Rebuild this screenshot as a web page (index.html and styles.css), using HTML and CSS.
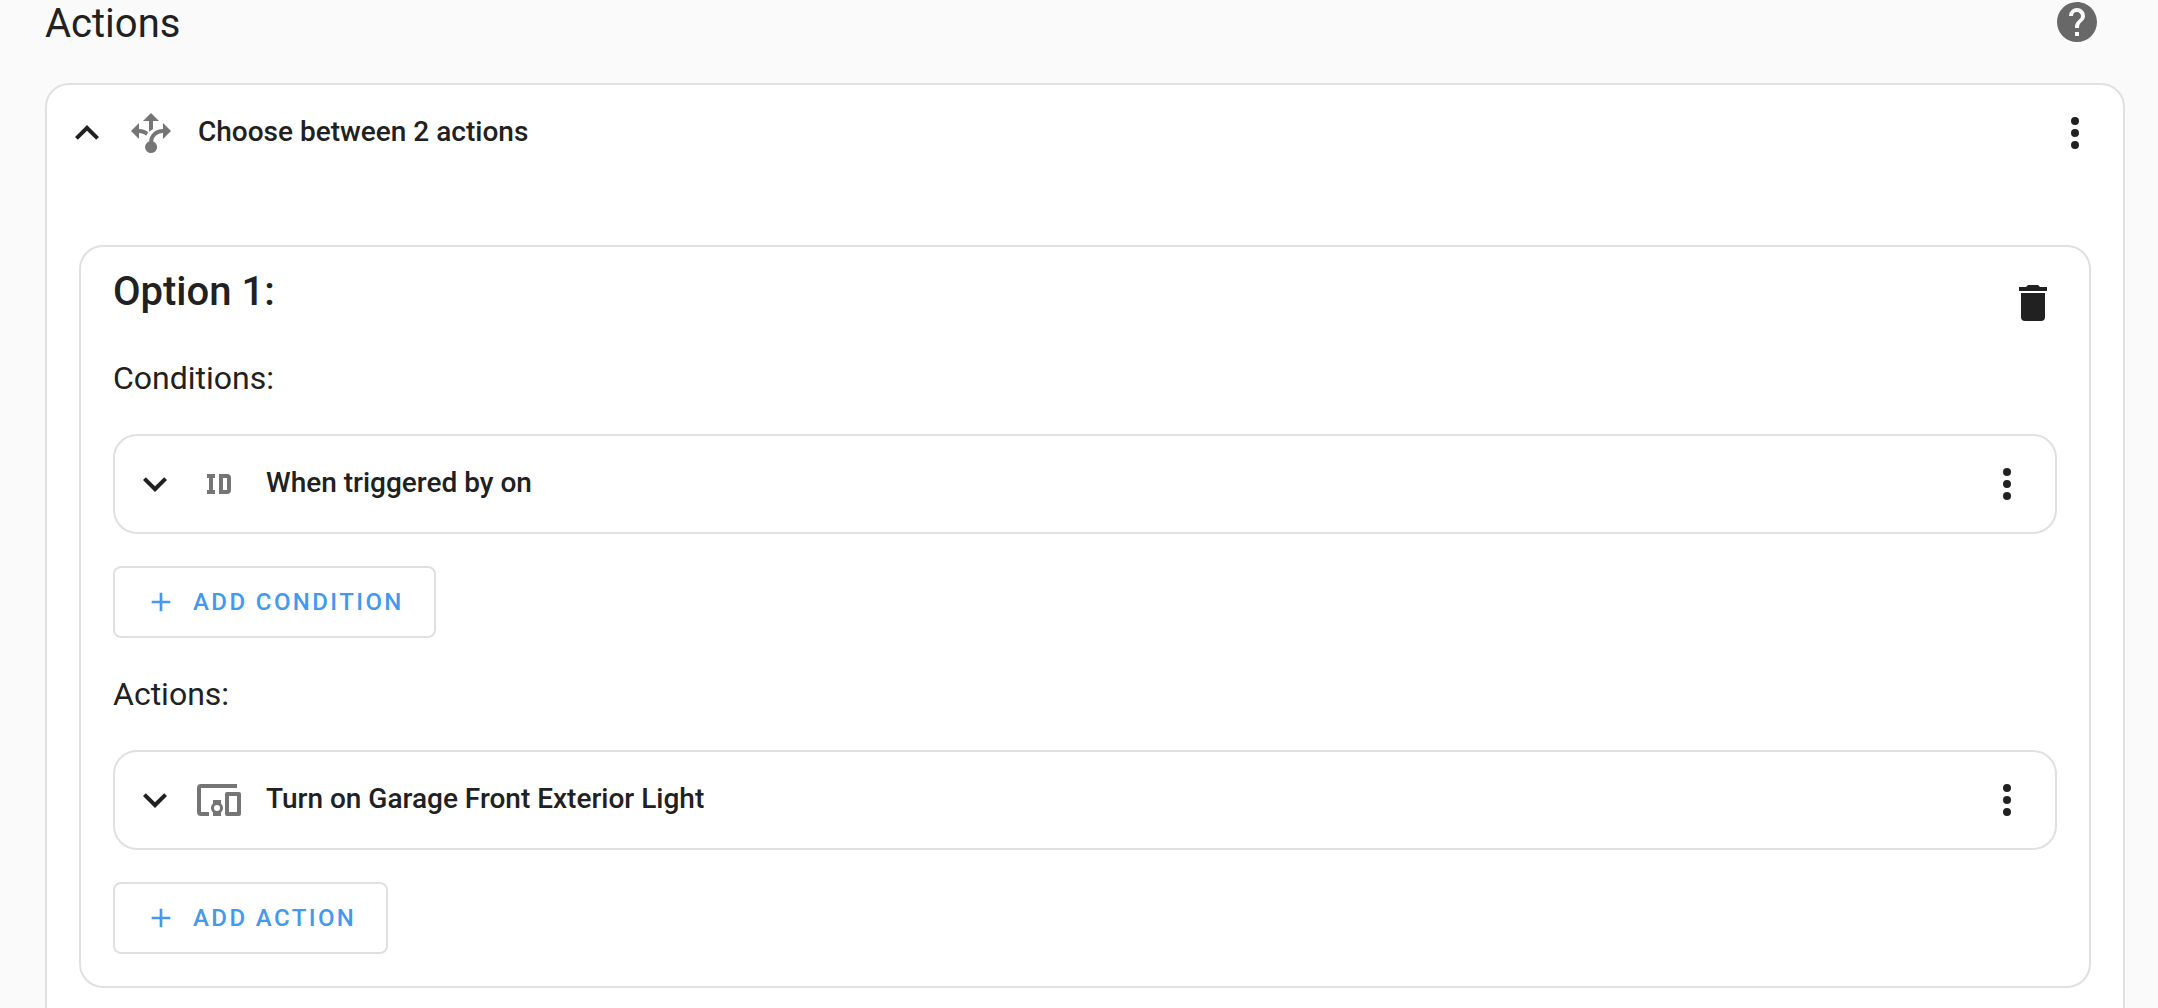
FILE: index.html
```html
<!DOCTYPE html>
<html lang="en">
<head>
    <meta charset="UTF-8">
    <meta name="viewport" content="width=device-width, initial-scale=1.0">
    <title>Automation Actions</title>
    <link rel="stylesheet" href="styles.css">
</head>
<body>
    <main class="page">
        <header class="page-header">
            <h1>Actions</h1>
            <a class="icon-link" href="#help" aria-label="Help">
                <svg class="icon" viewBox="0 0 24 24"><path d="M15.07,11.25L14.17,12.17C13.45,12.89 13,13.5 13,15H11V14.5C11,13.39 11.45,12.39 12.17,11.67L13.41,10.41C13.78,10.05 14,9.55 14,9C14,7.89 13.1,7 12,7A2,2 0 0,0 10,9H8A4,4 0 0,1 12,5A4,4 0 0,1 16,9C16,9.88 15.64,10.67 15.07,11.25M13,19H11V17H13M12,2A10,10 0 0,0 2,12A10,10 0 0,0 12,22A10,10 0 0,0 22,12C22,6.47 17.5,2 12,2Z"/></svg>
            </a>
        </header>

        <section class="card">
            <div class="row">
                <button class="icon-button" aria-label="Collapse">
                    <svg class="icon" viewBox="0 0 24 24"><path d="M7.41,15.41L12,10.83L16.59,15.41L18,14L12,8L6,14L7.41,15.41Z"/></svg>
                </button>
                <svg class="icon type-icon" viewBox="0 0 24 24"><path d="M9.64,13.4C8.63,12.5 7.34,12.03 6,12V15L2,11L6,7V10C7.67,10 9.3,10.57 10.63,11.59C10.22,12.15 9.89,12.76 9.64,13.4M18,15V12C17.5,12 13.5,12.16 13.05,16.2C14.61,16.75 15.43,18.47 14.88,20.03C14.33,21.59 12.61,22.41 11.05,21.86C9.5,21.3 8.67,19.59 9.22,18.03C9.5,17.17 10.2,16.5 11.05,16.2C11.34,12.61 14.4,9.88 18,10V7L22,11L18,15M13,6V10.1C12.2,10.5 11.6,10.9 11,11.4V6H8L12,2L16,6H13Z"/></svg>
                <h2 class="row-title">Choose between 2 actions</h2>
                <button class="icon-button" aria-label="Menu">
                    <svg class="icon" viewBox="0 0 24 24"><path d="M12,16A2,2 0 0,1 14,18A2,2 0 0,1 12,20A2,2 0 0,1 10,18A2,2 0 0,1 12,16M12,10A2,2 0 0,1 14,12A2,2 0 0,1 12,14A2,2 0 0,1 10,12A2,2 0 0,1 12,10M12,4A2,2 0 0,1 14,6A2,2 0 0,1 12,8A2,2 0 0,1 10,6A2,2 0 0,1 12,4Z"/></svg>
                </button>
            </div>

            <div class="card-content">
                <section class="card option">
                    <div class="option-header">
                        <h3>Option 1:</h3>
                        <button class="icon-button" aria-label="Delete option">
                            <svg class="icon" viewBox="0 0 24 24"><path d="M19,4H15.5L14.5,3H9.5L8.5,4H5V6H19M6,19A2,2 0 0,0 8,21H16A2,2 0 0,0 18,19V7H6V19Z"/></svg>
                        </button>
                    </div>

                    <h4>Conditions:</h4>
                    <div class="card row">
                        <button class="icon-button" aria-label="Expand">
                            <svg class="icon" viewBox="0 0 24 24"><path d="M7.41,8.58L12,13.17L16.59,8.58L18,10L12,16L6,10L7.41,8.58Z"/></svg>
                        </button>
                        <svg class="icon type-icon" viewBox="0 0 24 24"><path d="M6,7V9H7V15H6V17H10V15H9V9H10V7H6M12,7V17H16A2,2 0 0,0 18,15V9A2,2 0 0,0 16,7H12M14,9H16V15H14V9Z"/></svg>
                        <h5 class="row-title">When triggered by on</h5>
                        <button class="icon-button" aria-label="Menu">
                            <svg class="icon" viewBox="0 0 24 24"><path d="M12,16A2,2 0 0,1 14,18A2,2 0 0,1 12,20A2,2 0 0,1 10,18A2,2 0 0,1 12,16M12,10A2,2 0 0,1 14,12A2,2 0 0,1 12,14A2,2 0 0,1 10,12A2,2 0 0,1 12,10M12,4A2,2 0 0,1 14,6A2,2 0 0,1 12,8A2,2 0 0,1 10,6A2,2 0 0,1 12,4Z"/></svg>
                        </button>
                    </div>
                    <button class="add-button">
                        <svg viewBox="0 0 24 24"><path d="M19,13H13V19H11V13H5V11H11V5H13V11H19V13Z"/></svg>
                        Add condition
                    </button>

                    <h4>Actions:</h4>
                    <div class="card row">
                        <button class="icon-button" aria-label="Expand">
                            <svg class="icon" viewBox="0 0 24 24"><path d="M7.41,8.58L12,13.17L16.59,8.58L18,10L12,16L6,10L7.41,8.58Z"/></svg>
                        </button>
                        <svg class="icon type-icon" viewBox="0 0 24 24"><path d="M3,6H21V4H3A2,2 0 0,0 1,6V18A2,2 0 0,0 3,20H7V18H3V6M13,12H9V13.78C8.39,14.33 8,15.11 8,16C8,16.89 8.39,17.67 9,18.22V20H13V18.22C13.61,17.67 14,16.88 14,16C14,15.12 13.61,14.33 13,13.78V12M11,17.5A1.5,1.5 0 0,1 9.5,16A1.5,1.5 0 0,1 11,14.5A1.5,1.5 0 0,1 12.5,16A1.5,1.5 0 0,1 11,17.5M22,8H16A1,1 0 0,0 15,9V19A1,1 0 0,0 16,20H22A1,1 0 0,0 23,19V9A1,1 0 0,0 22,8M21,18H17V10H21V18Z"/></svg>
                        <h5 class="row-title">Turn on Garage Front Exterior Light</h5>
                        <button class="icon-button" aria-label="Menu">
                            <svg class="icon" viewBox="0 0 24 24"><path d="M12,16A2,2 0 0,1 14,18A2,2 0 0,1 12,20A2,2 0 0,1 10,18A2,2 0 0,1 12,16M12,10A2,2 0 0,1 14,12A2,2 0 0,1 12,14A2,2 0 0,1 10,12A2,2 0 0,1 12,10M12,4A2,2 0 0,1 14,6A2,2 0 0,1 12,8A2,2 0 0,1 10,6A2,2 0 0,1 12,4Z"/></svg>
                        </button>
                    </div>
                    <button class="add-button">
                        <svg viewBox="0 0 24 24"><path d="M19,13H13V19H11V13H5V11H11V5H13V11H19V13Z"/></svg>
                        Add action
                    </button>
                </section>
            </div>
        </section>
    </main>
</body>
</html>
```

FILE: styles.css
```css
* {
    box-sizing: border-box;
}
body {
    margin: 0;
    font-family: Roboto, sans-serif;
    font-size: 28px;
    color: #212121;
    background-color: #fafafa;
}
h1, h2, h3, h4, h5 {
    margin: 0;
}
.page {
    height: 100vh;
    overflow: hidden;
    padding: 0 33px 0 45px;
}
.page-header {
    display: flex;
    align-items: flex-start;
    justify-content: space-between;
    height: 83px;
    padding-right: 24px;
}
.page-header h1 {
    font-size: 40px;
    font-weight: 400;
    line-height: 47px;
}
.icon {
    display: block;
    flex: none;
    width: 48px;
    height: 48px;
    fill: currentColor;
}
.icon-link {
    color: #686868;
    line-height: 0;
    margin-top: -2px;
}
.icon-button {
    flex: none;
    padding: 0;
    border: none;
    background: none;
    color: inherit;
    cursor: pointer;
}
.type-icon {
    margin: 0 23px 0 16px;
    color: #757575;
}
.card {
    border: 2px solid #e0e0e0;
    border-radius: 24px;
    background-color: white;
}
.row {
    display: flex;
    align-items: center;
    min-height: 96px;
    padding: 0 24px 0 16px;
}
.card.row {
    min-height: 100px;
}
.row-title {
    flex: 1;
    padding-bottom: 2px;
    font-size: 28px;
    font-weight: 500;
    line-height: 40px;
}
.card-content {
    padding: 64px 32px;
}
.option {
    padding: 0 32px 32px;
}
.option-header {
    display: flex;
    align-items: flex-start;
    justify-content: space-between;
    height: 99px;
    padding-top: 21px;
}
.option-header h3 {
    font-size: 40px;
    font-weight: 500;
    line-height: 48px;
}
.option-header .icon-button {
    padding-top: 11px;
}
.option h4 {
    font-size: 32px;
    font-weight: 400;
    line-height: 64px;
    padding-bottom: 24px;
}
.add-button {
    display: flex;
    align-items: center;
    gap: 16px;
    height: 72px;
    margin-top: 32px;
    padding: 0 30px;
    border: 2px solid #e0e0e0;
    border-radius: 8px;
    background: none;
    color: #4299ee;
    font-family: inherit;
    font-size: 24px;
    font-weight: 500;
    letter-spacing: 0.1em;
    text-transform: uppercase;
    cursor: pointer;
}
.add-button svg {
    width: 32px;
    height: 32px;
    fill: currentColor;
}
.add-button + h4 {
    margin-top: 24px;
}
```
